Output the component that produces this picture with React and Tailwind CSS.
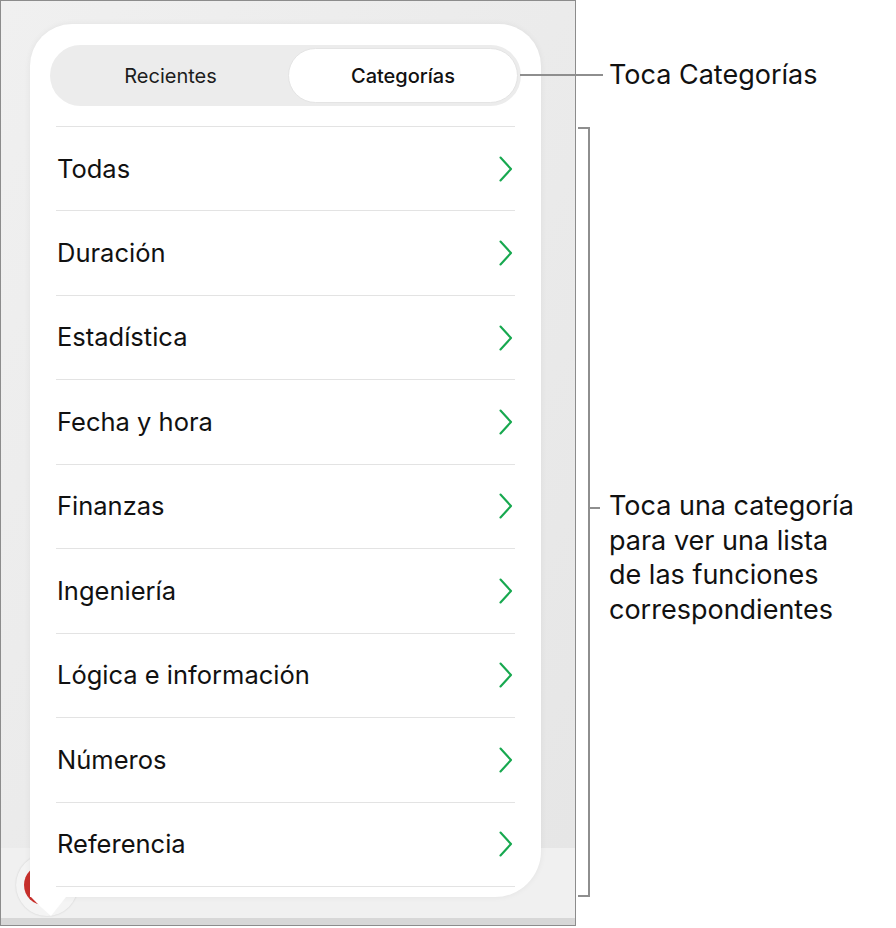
import React from "react";

const rows = [
  "Todas",
  "Duración",
  "Estadística",
  "Fecha y hora",
  "Finanzas",
  "Ingeniería",
  "Lógica e información",
  "Números",
  "Referencia",
];

function Chevron() {
  return (
    <svg width="16" height="26" viewBox="0 0 16 26" fill="none">
      <path d="M2.5 1.5 L13 13 L2.5 24.5" stroke="#17a84f" strokeWidth="2.1" strokeLinecap="round" strokeLinejoin="round" />
    </svg>
  );
}

function Popover() {
  return (
    <div className="absolute left-[29px] top-[23px] z-10 w-[511px] h-[873px] bg-white rounded-tl-[42px] rounded-tr-[42px] rounded-br-[46px] px-[20px] pt-[21px] pb-[10px] shadow-[0_0_6px_rgba(0,0,0,0.06)]">
      {/* tabs */}
      <div className="flex h-[61px] p-[3px] rounded-full bg-[#ececec]">
        <div className="flex-1 flex items-center justify-center text-[20px] text-[#1d1d1d]">Recientes</div>
        <div className="w-[230px] flex items-center justify-center rounded-full bg-white border border-[#e4e4e4] text-[20px] font-medium text-[#111]">
          Categorías
        </div>
      </div>

      <div className="mt-[20px] mx-[6px]">
        {rows.map((r) => (
          <div key={r} className="h-[84.45px] border-t border-[#e3e3e3] flex items-center justify-between pl-[1px] pr-[1px]">
            <span className="text-[25.5px] text-[#111]">{r}</span>
            <Chevron />
          </div>
        ))}
        <div className="border-t border-[#e3e3e3]" />
      </div>

      {/* arrow */}
      <svg className="absolute left-0 top-[870px]" width="40" height="24" viewBox="0 0 40 24">
        <path d="M0 0 L0 2 Q 9 12 21 22 L36 3 L36 0 Z" fill="#ffffff" />
      </svg>
    </div>
  );
}

function Screen() {
  return (
    <div className="relative w-[576px] h-[926px] border border-[#8c8c8c] flex flex-col overflow-hidden">
      <div className="h-[847px] bg-gradient-to-br from-[#f0f0f0] to-[#e6e6e6]" />
      <div className="relative h-[70px] bg-[#f0f0f0]">
        <div className="absolute left-[15px] top-[6px] w-[62px] h-[62px] rounded-full bg-[#f4f4f4] shadow-[0_0_2px_rgba(0,0,0,0.15)] flex items-center justify-center">
          <div className="w-[40px] h-[40px] rounded-full bg-[#c8302c] -translate-x-[3px]" />
        </div>
      </div>
      <div className="h-[7px] bg-[#d7d7d7]" />
      <Popover />
    </div>
  );
}

export default function App() {
  return (
    <div className="relative w-[896px] h-[928px] bg-white flex" style={{ fontFamily: "Inter, 'Liberation Sans', sans-serif" }}>
      <Screen />

      {/* callout line to the tabs */}
      <div className="absolute left-[520px] top-[74px] w-[83px] h-[2px] bg-[#8e8e8e] z-20" />

      <div className="flex flex-col">
        <div className="h-[35px] mt-[57px] flex items-center pl-[33px] text-[27px] text-[#111] leading-[35px]">
          Toca Categorías
        </div>

        <div className="mt-[35px] flex">
          <div className="relative ml-[2px] w-[12px] h-[770px] border-y-2 border-r-2 border-[#8e8e8e]">
            <div className="absolute left-full top-[378px] w-[12px] h-[2px] bg-[#8e8e8e]" />
          </div>
          <div className="ml-[19px] pt-[362px] text-[27px] leading-[34.7px] text-[#111] whitespace-nowrap">
            Toca una categoría
            <br />
            para ver una lista
            <br />
            de las funciones
            <br />
            correspondientes
          </div>
        </div>
      </div>
    </div>
  );
}
